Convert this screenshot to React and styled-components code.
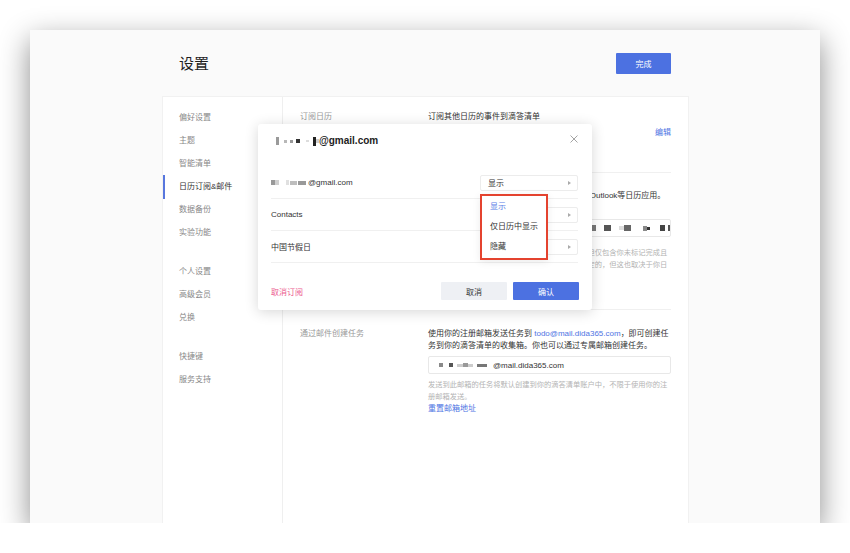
import React from "react";
import styled, { createGlobalStyle } from "styled-components";

const GlobalStyle = createGlobalStyle`
  * { box-sizing: border-box; }
  html, body {
    margin: 0;
    padding: 0;
    background: #fff;
  }
  body {
    font-family: "Liberation Sans", "Noto Sans CJK SC", sans-serif;
    color: #333;
  }
`;

const BLUE = "#4c71e1";

const Window = styled.div`
  margin: 30px 0 0 30px;
  width: 790px;
  height: 493px;
  background: #fafafa;
  box-shadow: 0 10px 28px rgba(0, 0, 0, 0.45);
  display: flex;
  flex-direction: column;
  padding-left: 133px;
`;

const Header = styled.div`
  width: 525px;
  height: 67px;
  display: flex;
  justify-content: space-between;
  align-items: flex-start;
  padding: 23px 17px 0 16px;
`;

const Title = styled.h1`
  margin: 0;
  font-size: 15px;
  line-height: 21px;
  font-weight: 400;
  color: #1f1f1f;
`;

const DoneButton = styled.button`
  width: 55px;
  height: 21px;
  border: none;
  border-radius: 1px;
  background: ${BLUE};
  color: #fff;
  font-family: inherit;
  font-size: 8px;
  padding: 0;
`;

const Panel = styled.div`
  width: 525px;
  flex: 1;
  background: #fff;
  display: flex;
  position: relative;
  box-shadow: 0 0 0 1px #f1f1f1;
`;

const Sidebar = styled.nav`
  flex: none;
  width: 120px;
  border-right: 1px solid #efefef;
  padding-top: 9px;
`;

const NavGroup = styled.div`
  margin-bottom: 16px;
`;

const NavItem = styled.div`
  position: relative;
  height: 23px;
  line-height: 23px;
  padding-left: 16px;
  font-size: 8px;
  color: ${(p) => (p.$active ? "#333" : "#888")};

  &::before {
    content: "";
    display: ${(p) => (p.$active ? "block" : "none")};
    position: absolute;
    left: 0;
    top: 0;
    width: 2px;
    height: 24px;
    background: #5877de;
  }
`;

const Main = styled.div`
  flex: 1;
  min-width: 0;
  padding: 0 17px;
`;

const Section = styled.section`
  display: grid;
  grid-template-columns: 128px 243px;
  padding: ${(p) => p.$pt}px 0 ${(p) => p.$pb}px;
  border-top: ${(p) => (p.$first ? "none" : "1px solid #f0f0f0")};
`;

const Label = styled.div`
  font-size: 8px;
  line-height: 12px;
  color: #999;
`;

const Desc = styled.div`
  font-size: 8px;
  line-height: 12px;
  color: #333;
  white-space: ${(p) => (p.$nowrap ? "nowrap" : "normal")};
`;

const Note = styled.div`
  font-size: 7.25px;
  line-height: 12px;
  color: #b3b3b3;
  margin-top: ${(p) => p.$mt || 0}px;
`;

const Link = styled.span`
  color: #4f74e3;
`;

const AccountRow = styled.div`
  margin-top: 4px;
  display: flex;
  justify-content: space-between;
  font-size: 8px;
  line-height: 12px;
`;

const InputBox = styled.div`
  margin-top: ${(p) => p.$mt}px;
  height: 18px;
  border: 1px solid #e8e8e8;
  border-radius: 2px;
  display: flex;
  align-items: center;
  padding: 0 10px;
  font-size: 8px;
  color: #333;
  overflow: hidden;
`;

const Pix = styled.span`
  display: inline-block;
  flex: none;
  width: ${(p) => p.$w}px;
  height: ${(p) => p.$h}px;
  margin-left: ${(p) => p.$m}px;
  background: ${(p) => p.$c};
  filter: blur(0.35px);
`;

const Redacted = styled.span`
  display: inline-flex;
  align-items: center;
  margin-right: ${(p) => p.$gap || 0}px;
`;

const Blur = ({ blocks, gap }) => (
  <Redacted $gap={gap}>
    {blocks.map(([m, w, h, c], i) => (
      <Pix key={i} $m={m} $w={w} $h={h} $c={c} />
    ))}
  </Redacted>
);

/* dialog */

const Dialog = styled.div`
  position: absolute;
  left: 95px;
  top: 27px;
  width: 334px;
  background: #fff;
  border-radius: 3px;
  box-shadow: 0 2px 14px rgba(0, 0, 0, 0.16);
`;

const DialogHeader = styled.div`
  height: 43px;
  display: flex;
  justify-content: space-between;
  align-items: flex-start;
  padding: 10px 14px 0 15px;
`;

const DialogTitle = styled.div`
  display: flex;
  align-items: center;
  font-size: 10px;
  line-height: 14px;
  font-weight: 700;
  color: #222;
`;

const CloseIcon = styled.svg`
  margin-top: 1px;
  width: 8px;
  height: 8px;
`;

const Rows = styled.div`
  padding: 0 14px 0 13px;
`;

const Row = styled.div`
  height: 32px;
  border-bottom: 1px solid #f0f0f0;
  display: flex;
  justify-content: space-between;
  align-items: center;
`;

const RowName = styled.div`
  display: flex;
  align-items: center;
  font-size: 8px;
  color: #333;
`;

const SelectWrap = styled.div`
  position: relative;
`;

const Select = styled.div`
  width: 98px;
  height: 16px;
  border: 1px solid #ececec;
  border-radius: 2px;
  display: flex;
  justify-content: space-between;
  align-items: center;
  padding: 0 6px 0 7px;
  font-size: 8px;
  color: #333;
`;

const Menu = styled.div`
  position: absolute;
  top: calc(100% + 3px);
  left: 0;
  width: 68px;
  padding: 1px 0;
  background: #fff;
  border: 2px solid #e4432f;
  box-shadow: 0 2px 8px rgba(0, 0, 0, 0.08);
  z-index: 2;
`;

const MenuItem = styled.div`
  height: 20px;
  line-height: 20px;
  padding-left: 8px;
  font-size: 8px;
  color: ${(p) => (p.$selected ? "#5b7ce6" : "#333")};
`;

const DialogFooter = styled.div`
  display: flex;
  align-items: center;
  gap: 6px;
  padding: 19px 13px 10px;
`;

const Unsubscribe = styled.div`
  flex: 1;
  font-size: 8px;
  color: #ec5b8e;
`;

const FooterButton = styled.button`
  width: 66px;
  height: 18px;
  border: none;
  border-radius: 1px;
  padding: 0;
  font-family: inherit;
  font-size: 8px;
  background: ${(p) => (p.$primary ? BLUE : "#eef0f4")};
  color: ${(p) => (p.$primary ? "#fff" : "#333")};
`;

const Caret = () => (
  <svg width="3" height="4" viewBox="0 0 3 4">
    <polygon points="0,0 3,2 0,4" fill="#aaa" />
  </svg>
);

const titleBlur = [
  [3, 3, 8, "#9a9a9a"],
  [5, 3, 3, "#b8b8b8"],
  [3, 3, 3, "#999"],
  [3, 4, 4, "#333"],
  [6, 3, 2, "#ddd"],
  [4, 3, 9, "#222"],
  [0, 3, 4, "#d0d0d0"],
];

const rowBlur = [
  [0, 4, 5, "#999"],
  [0, 4, 5, "#cfcfcf"],
  [7, 3, 5, "#e0e0e0"],
  [1, 7, 4, "#bdbdbd"],
  [1, 8, 4, "#999"],
];

const urlBlur = [
  [0, 6, 5, "#888"], [4, 5, 5, "#ccc"], [3, 8, 4, "#666"], [5, 4, 6, "#aaa"],
  [3, 9, 5, "#555"], [4, 6, 4, "#bbb"], [5, 5, 6, "#777"], [3, 7, 5, "#999"],
  [6, 4, 5, "#444"], [4, 8, 4, "#ccc"], [3, 5, 6, "#666"], [5, 6, 5, "#aaa"],
  [4, 4, 6, "#555"], [5, 8, 4, "#888"], [3, 5, 5, "#bbb"], [4, 6, 6, "#777"],
  [8, 7, 6, "#555"], [8, 5, 4, "#ddd"], [0, 7, 6, "#666"], [12, 4, 5, "#888"],
  [0, 3, 3, "#333"], [10, 5, 6, "#444"], [3, 5, 6, "#555"],
];

const mailBlur = [
  [0, 4, 4, "#8a8a8a"],
  [6, 4, 4, "#555"],
  [4, 6, 3, "#ccc"],
  [0, 5, 4, "#999"],
  [0, 5, 3, "#ccc"],
  [4, 10, 3, "#777"],
];

const App = () => (
  <>
    <GlobalStyle />
    <Window>
      <Header>
        <Title>设置</Title>
        <DoneButton>完成</DoneButton>
      </Header>
      <Panel>
        <Sidebar>
          <NavGroup>
            <NavItem>偏好设置</NavItem>
            <NavItem>主题</NavItem>
            <NavItem>智能清单</NavItem>
            <NavItem $active>日历订阅&amp;邮件</NavItem>
            <NavItem>数据备份</NavItem>
            <NavItem>实验功能</NavItem>
          </NavGroup>
          <NavGroup>
            <NavItem>个人设置</NavItem>
            <NavItem>高级会员</NavItem>
            <NavItem>兑换</NavItem>
          </NavGroup>
          <NavGroup>
            <NavItem>快捷键</NavItem>
            <NavItem>服务支持</NavItem>
          </NavGroup>
        </Sidebar>

        <Main>
          <Section $first $pt={14} $pb={33}>
            <Label>订阅日历</Label>
            <div>
              <Desc>订阅其他日历的事件到滴答清单</Desc>
              <AccountRow>
                <RowName>
                  <Blur blocks={rowBlur} gap={2} />
                  @gmail.com
                </RowName>
                <Link>编辑</Link>
              </AccountRow>
            </div>
          </Section>

          <Section $pt={17} $pb={26}>
            <Label>订阅滴答清单</Label>
            <div>
              <Desc $nowrap>将滴答清单的任务订阅到Google 日历、iCal、Outlook等日历应用。</Desc>
              <InputBox $mt={17}>
                <Blur blocks={urlBlur} />
              </InputBox>
              <Note $mt={10}>
                该订阅链接的日历会同步滴答清单中的任务内容，但仅包含你未标记完成且有截止日期的任务。同步的频率通常是由我们来设定的，但这也取决于你日历应用的刷新频率。
              </Note>
            </div>
          </Section>

          <Section $pt={18} $pb={0}>
            <Label>通过邮件创建任务</Label>
            <div>
              <Desc>
                使用你的注册邮箱发送任务到 <Link>todo@mail.dida365.com</Link>，即可创建任务到你的滴答清单的收集箱。你也可以通过专属邮箱创建任务。
              </Desc>
              <InputBox $mt={4}>
                <Blur blocks={mailBlur} gap={6} />
                @mail.dida365.com
              </InputBox>
              <Note $mt={5}>
                发送到此邮箱的任务将默认创建到你的滴答清单账户中，不限于使用你的注册邮箱发送。
              </Note>
              <Desc>
                <Link>重置邮箱地址</Link>
              </Desc>
            </div>
          </Section>
        </Main>

        <Dialog>
          <DialogHeader>
            <DialogTitle>
              <Blur blocks={titleBlur} />
              @gmail.com
            </DialogTitle>
            <CloseIcon viewBox="0 0 8 8">
              <path d="M0.5 0.5 L7.5 7.5 M7.5 0.5 L0.5 7.5" stroke="#9a9a9a" strokeWidth="0.9" />
            </CloseIcon>
          </DialogHeader>
          <Rows>
            <Row>
              <RowName>
                <Blur blocks={rowBlur} gap={2} />
                @gmail.com
              </RowName>
              <SelectWrap>
                <Select>
                  显示
                  <Caret />
                </Select>
                <Menu>
                  <MenuItem $selected>显示</MenuItem>
                  <MenuItem>仅日历中显示</MenuItem>
                  <MenuItem>隐藏</MenuItem>
                </Menu>
              </SelectWrap>
            </Row>
            <Row>
              <RowName>Contacts</RowName>
              <SelectWrap>
                <Select>
                  显示
                  <Caret />
                </Select>
              </SelectWrap>
            </Row>
            <Row>
              <RowName>中国节假日</RowName>
              <SelectWrap>
                <Select>
                  显示
                  <Caret />
                </Select>
              </SelectWrap>
            </Row>
          </Rows>
          <DialogFooter>
            <Unsubscribe>取消订阅</Unsubscribe>
            <FooterButton>取消</FooterButton>
            <FooterButton $primary>确认</FooterButton>
          </DialogFooter>
        </Dialog>
      </Panel>
    </Window>
  </>
);

export default App;
